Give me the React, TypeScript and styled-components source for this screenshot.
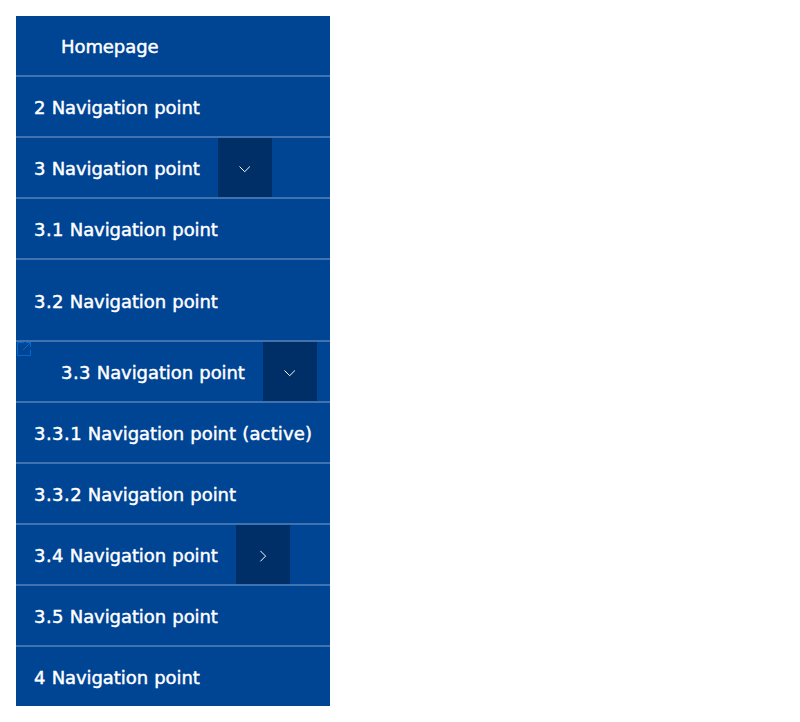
import React from "react";
import styled, { createGlobalStyle } from "styled-components";

const Global = createGlobalStyle`
  body { margin: 0; background: #fff; }
  *, *::before, *::after { box-sizing: border-box; }
`;
const Nav = styled.nav`
  width: 314px;
  margin: 16px;
  background: #004494;
  font-family: "DejaVu Sans", Verdana, sans-serif;
`;
const List = styled.ul`
  list-style: none;
  margin: 0;
  padding: 0;
`;
const Item = styled.li<{ $height?: number }>`
  display: flex;
  align-items: stretch;
  height: ${(p) => p.$height ?? 61}px;
  border-top: 2px solid #3f72af;
  &:first-child { border-top: 0; height: 59px; }
`;
const IconSlot = styled.span`
  flex: 0 0 27px;
  color: #006ad4;
  svg { display: block; }
`;
const Link = styled.a<{ $width: number; $tall: boolean }>`
  flex: 0 0 auto;
  display: flex;
  align-items: center;
  width: ${(p) => p.$width + 36}px;
  padding: ${(p) => (p.$tall ? 4 : 2)}px 18px 0;
  color: #fff;
  font-size: 18px;
  line-height: 24px;
  letter-spacing: -0.08px;
  word-spacing: 0.6px;
  white-space: pre;
  text-decoration: none;
  -webkit-text-stroke: 0.45px #fff;
`;
const Numbering = styled.span`
  letter-spacing: 0.45px;
  word-spacing: -0.4px;
`;
const Status = styled.span`
  letter-spacing: 0.12px;
`;
const Toggle = styled.button`
  display: flex;
  align-items: center;
  justify-content: center;
  width: 54px;
  padding: 3px 0 0;
  border: 0;
  background: #002f67;
  color: #fff;
`;

type Entry = {
  number?: string;
  label: string;
  status?: string;
  width: number;
  slot?: "empty" | "external";
  toggle?: "down" | "right";
  height?: number;
};
const entries: Entry[] = [
  { label: "Homepage", width: 97, slot: "empty" },
  { number: "2", label: "Navigation point", width: 166 },
  { number: "3", label: "Navigation point", width: 166, toggle: "down" },
  { number: "3.1", label: "Navigation point", width: 184 },
  { number: "3.2", label: "Navigation point", width: 184, height: 82 },
  { number: "3.3", label: "Navigation point", width: 184, slot: "external", toggle: "down" },
  { number: "3.3.1", label: "Navigation point", status: "(active)", width: 278 },
  { number: "3.3.2", label: "Navigation point", width: 202 },
  { number: "3.4", label: "Navigation point", width: 184, toggle: "right" },
  { number: "3.5", label: "Navigation point", width: 184 },
  { number: "4", label: "Navigation point", width: 166 },
];

const ExternalIcon = () => (
  <svg width="16" height="16" viewBox="0 0 16 16" fill="none" stroke="currentColor">
    <path d="M10 .5h4.5V5M14.5.5 7 8M8 .5H1.5v13h13V8" />
  </svg>
);

const Chevron = ({ direction }: { direction: "down" | "right" }) => (
  <svg width="12" height="12" viewBox="0 0 12 12" fill="none" stroke="currentColor" strokeWidth="1">
    <path d={direction === "down" ? "M.5 3.5 5.7 8.7 10.9 3.5" : "M3.4.9 8.6 6.1 3.4 11.3"} />
  </svg>
);

export default function App() {
  return (
    <>
      <Global />
      <Nav>
        <List>
          {entries.map((e) => (
            <Item key={e.number ?? e.label} $height={e.height}>
              {e.slot && <IconSlot>{e.slot === "external" && <ExternalIcon />}</IconSlot>}
              <Link $width={e.width} $tall={e.height !== undefined}>
                {e.number && <Numbering>{e.number} </Numbering>}
                <span>{e.label}</span>
                {e.status && <Status> {e.status}</Status>}
              </Link>
              {e.toggle && (
                <Toggle aria-label={`Toggle ${e.number}`}>
                  <Chevron direction={e.toggle} />
                </Toggle>
              )}
            </Item>
          ))}
        </List>
      </Nav>
    </>
  );
}
